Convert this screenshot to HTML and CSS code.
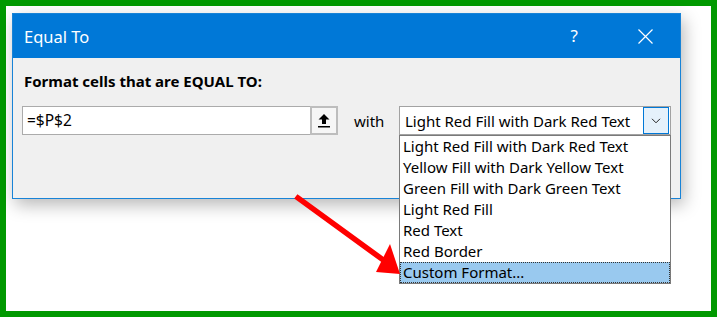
FILE: index.html
```html
<!DOCTYPE html>
<html>
<head>
<meta charset="utf-8">
<link rel="stylesheet" href="styles.css">
</head>
<body>
<div class="frame">
  <div class="dialog">
    <div class="titlebar">
      <span class="title">Equal To</span>
      <span class="help">?</span>
      <svg class="close" width="15" height="15" viewBox="0 0 15 15"><path d="M0.5 0.5 L14.5 14.5 M14.5 0.5 L0.5 14.5" stroke="#fff" stroke-width="1.2" fill="none"/></svg>
    </div>
    <div class="body">
      <div class="label">Format cells that are EQUAL TO:</div>
      <div class="row">
        <div class="refbox">
          <div class="input">=$P$2</div>
          <div class="refbtn">
            <svg width="12" height="14" viewBox="0 0 12 14"><path d="M6 0 L11.5 5.5 L8 5.5 L8 10 L4 10 L4 5.5 L0.5 5.5 Z" fill="#000"/><rect x="0" y="12" width="12" height="1.5" fill="#000"/></svg>
          </div>
        </div>
        <span class="with">with</span>
        <div class="select">
          <span class="sel-text">Light Red Fill with Dark Red Text</span>
          <span class="dd-btn">
            <svg width="10" height="6" viewBox="0 0 10 6"><path d="M1 0.8 L5 4.8 L9 0.8" stroke="#222" stroke-width="1" fill="none"/></svg>
          </span>
          <div class="list">
            <div class="item">Light Red Fill with Dark Red Text</div>
            <div class="item">Yellow Fill with Dark Yellow Text</div>
            <div class="item">Green Fill with Dark Green Text</div>
            <div class="item">Light Red Fill</div>
            <div class="item">Red Text</div>
            <div class="item">Red Border</div>
            <div class="item selected">Custom Format...</div>
          </div>
        </div>
      </div>
    </div>
  </div>
</div>
<svg class="arrow" width="717" height="317" viewBox="0 0 717 317">
  <line x1="298" y1="198" x2="386" y2="262" stroke="#ff0000" stroke-width="5.5" stroke-linecap="square"/>
  <polygon points="400,274 376,272 390,244" fill="#ff0000"/>
</svg>
</body>
</html>
```

FILE: styles.css
```css
html, body {
  margin: 0;
  padding: 0;
}
body {
  position: relative;
  width: 717px;
  height: 317px;
  overflow: hidden;
  font-family: "Noto Sans", "Liberation Sans", sans-serif;
  color: #000;
  background: #fff;
}
.frame {
  box-sizing: border-box;
  width: 717px;
  height: 317px;
  border: 6px solid #009900;
  background: #fff;
  padding: 7px 0 0 6px;
}
.dialog {
  box-sizing: border-box;
  width: 669px;
  height: 186px;
  border: 1px solid #1883d7;
  background: #f0f0f0;
  box-shadow: 3px 6px 16px rgba(0, 0, 0, 0.28);
  display: flex;
  flex-direction: column;
}
.titlebar {
  height: 44px;
  background: #0078d7;
  color: #fff;
  display: flex;
  align-items: center;
  padding-left: 11px;
  padding-right: 27px;
}
.title {
  flex: 1;
  font-size: 16.5px;
}
.help {
  font-size: 17px;
  margin-right: 60px;
  margin-top: -1px;
}
.close {
  display: block;
}
.body {
  flex: 1;
  padding: 13px 0 0 9px;
}
.label {
  font-weight: bold;
  font-size: 15px;
  line-height: 20px;
  margin-left: 2px;
}
.row {
  display: flex;
  align-items: center;
  margin-top: 15px;
}
.refbox {
  display: flex;
}
.input {
  box-sizing: border-box;
  width: 288px;
  height: 29px;
  border: 1px solid #ababab;
  border-right: none;
  background: #fff;
  font-size: 15.5px;
  line-height: 27px;
  padding-left: 4px;
}
.refbtn {
  box-sizing: border-box;
  width: 28px;
  height: 29px;
  border: 2px solid #bdbdbd;
  background: #f6f6f6;
  display: flex;
  align-items: center;
  justify-content: center;
}
.refbtn svg {
  display: block;
}
.with {
  font-size: 15px;
  margin-left: 16px;
  width: 45px;
}
.select {
  position: relative;
  box-sizing: border-box;
  width: 272px;
  height: 29px;
  border: 1px solid #a2a2a2;
  background: #fff;
  display: flex;
  align-items: center;
}
.sel-text {
  flex: 1;
  font-size: 15px;
  padding-left: 5px;
  white-space: nowrap;
}
.dd-btn {
  box-sizing: border-box;
  width: 26px;
  height: 27px;
  margin-right: 1px;
  border: 1px solid #0078d7;
  background: #e5f1fb;
  display: flex;
  align-items: center;
  justify-content: center;
}
.dd-btn svg {
  display: block;
}
.list {
  position: absolute;
  left: -1px;
  top: 28px;
  box-sizing: border-box;
  width: 272px;
  border: 1px solid #7a7a7a;
  background: #fff;
  z-index: 2;
}
.item {
  box-sizing: border-box;
  height: 21px;
  line-height: 21px;
  font-size: 15px;
  padding-left: 3px;
  white-space: nowrap;
}
.selected {
  background: #99c9ef;
  border: 1px dotted #333;
  line-height: 19px;
  padding-left: 2px;
}
.arrow {
  position: absolute;
  left: 0;
  top: 0;
  z-index: 5;
  pointer-events: none;
}
```
